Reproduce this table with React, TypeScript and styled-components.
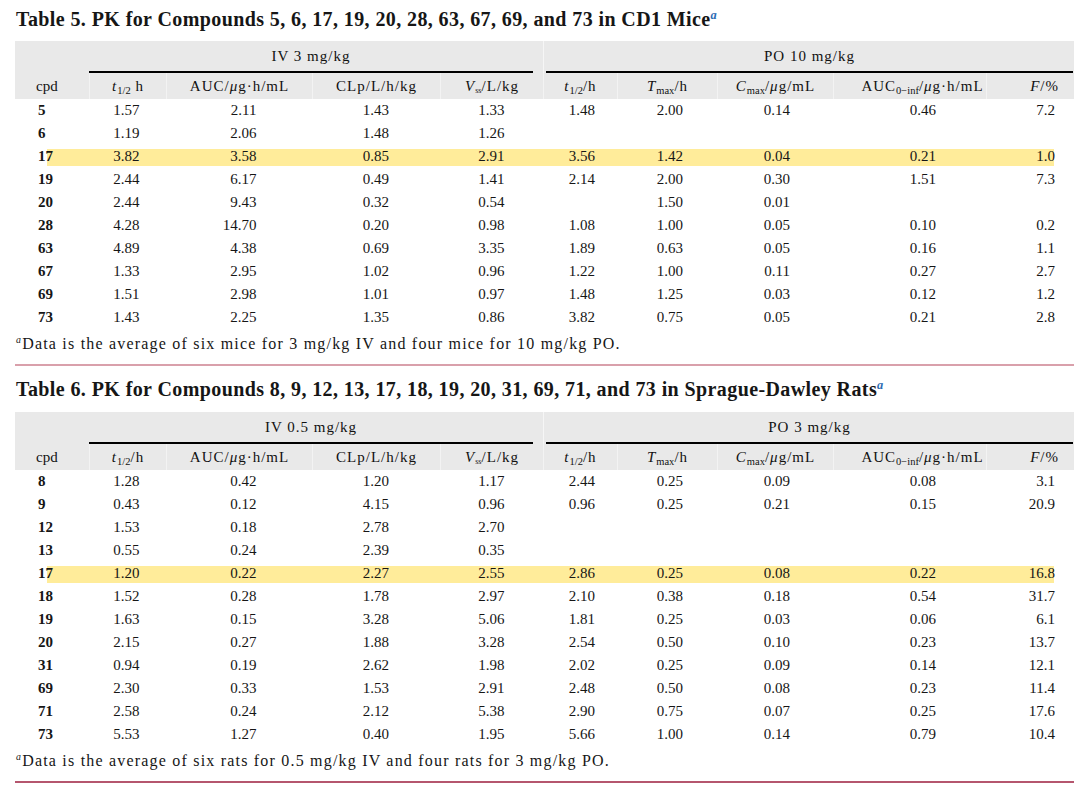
import React from 'react';
import styled, { createGlobalStyle } from 'styled-components';

const GlobalStyle = createGlobalStyle`
  html, body {
    margin: 0;
    padding: 0;
    background: #ffffff;
  }
  body {
    font-family: "Liberation Serif", "Times New Roman", serif;
    color: #161616;
  }
`;

const COLS = '74px 77px 146px 128px 103px 74px 100px 116px 153px 88px';

// right padding for the numbers in each column (decimal alignment)
const DATA_PAD = [0, 26.5, 55.5, 51, 38.5, 22, 34, 43, 50, 19];

const Page = styled.div`
  width: 1059px;
  padding: 7px 0 0 15px;
`;

const Title = styled.h2<{ $top?: number; $bottom?: number }>`
  margin: ${p => p.$top ?? 0}px 0 ${p => p.$bottom ?? 11}px 1px;
  font-size: 20px;
  line-height: 24px;
  font-weight: bold;
  letter-spacing: 0.4px;
  white-space: nowrap;
`;

const Sup = styled.sup<{ $link?: boolean }>`
  font-style: italic;
  font-size: 0.62em;
  line-height: 0;
  vertical-align: 0.6em;
  color: ${p => (p.$link ? '#2d6cb3' : 'inherit')};
`;

const I = styled.i`
  font-style: italic;
`;

const Sub = styled.sub<{ $small?: boolean }>`
  font-size: ${p => (p.$small ? '0.55em' : '0.7em')};
  line-height: 0;
  vertical-align: -0.3em;
  letter-spacing: 0;
`;

const HeadBlock = styled.div`
  background: #e9e9e9;
  color: #111;
  font-size: 15px;
  letter-spacing: 1px;
`;

const GroupRow = styled.div`
  display: grid;
  grid-template-columns: 74px 454px 531px;
  height: 32px;
`;

const GroupCell = styled.div<{ $divider?: boolean }>`
  display: flex;
  align-items: flex-end;
  border-left: ${p => (p.$divider ? '1px solid #f6f6f6' : 'none')};
`;

const GroupLabel = styled.div<{ $ml: number; $mr: number }>`
  flex: 1;
  margin: 0 ${p => p.$mr}px 0 ${p => p.$ml}px;
  height: 30px;
  line-height: 30px;
  text-align: center;
  border-bottom: 2px solid #000;
`;

const HeadRow = styled.div`
  display: grid;
  grid-template-columns: ${COLS};
  height: 26px;
  line-height: 26px;
`;

const HeadCell = styled.div<{ $align?: string; $pl?: number; $pr?: number; $tight?: boolean }>`
  text-align: ${p => p.$align ?? 'center'};
  padding-left: ${p => p.$pl ?? 0}px;
  padding-right: ${p => p.$pr ?? 0}px;
  letter-spacing: ${p => (p.$tight ? '0' : 'inherit')};
  white-space: nowrap;
  border-left: 1px solid #f3f3f3;
  &:first-child {
    border-left: none;
  }
`;

const Row = styled.div<{ $hl?: boolean }>`
  display: grid;
  grid-template-columns: ${COLS};
  height: 23px;
  line-height: 23px;
  font-size: 15px;
  position: relative;

  &::before {
    content: '';
    display: ${p => (p.$hl ? 'block' : 'none')};
    position: absolute;
    left: 32px;
    right: 20px;
    top: 4px;
    bottom: 2px;
    background: #ffec9a;
  }
`;

const Cpd = styled.div`
  position: relative;
  padding-left: 23px;
  font-weight: bold;
`;

const Num = styled.div<{ $pad: number }>`
  position: relative;
  text-align: right;
  padding-right: ${p => p.$pad}px;
`;

const Note = styled.p`
  margin: 5px 0 0 1px;
  font-size: 16px;
  line-height: 20px;
  letter-spacing: 1.2px;
  white-space: nowrap;
`;

const Rule = styled.div<{ $color: string }>`
  margin-top: 10px;
  height: 2px;
  background: ${p => p.$color};
`;

type RowData = { cpd: string; v: string[]; hl?: boolean };

const mice: RowData[] = [
  { cpd: '5', v: ['1.57', '2.11', '1.43', '1.33', '1.48', '2.00', '0.14', '0.46', '7.2'] },
  { cpd: '6', v: ['1.19', '2.06', '1.48', '1.26', '', '', '', '', ''] },
  { cpd: '17', v: ['3.82', '3.58', '0.85', '2.91', '3.56', '1.42', '0.04', '0.21', '1.0'], hl: true },
  { cpd: '19', v: ['2.44', '6.17', '0.49', '1.41', '2.14', '2.00', '0.30', '1.51', '7.3'] },
  { cpd: '20', v: ['2.44', '9.43', '0.32', '0.54', '', '1.50', '0.01', '', ''] },
  { cpd: '28', v: ['4.28', '14.70', '0.20', '0.98', '1.08', '1.00', '0.05', '0.10', '0.2'] },
  { cpd: '63', v: ['4.89', '4.38', '0.69', '3.35', '1.89', '0.63', '0.05', '0.16', '1.1'] },
  { cpd: '67', v: ['1.33', '2.95', '1.02', '0.96', '1.22', '1.00', '0.11', '0.27', '2.7'] },
  { cpd: '69', v: ['1.51', '2.98', '1.01', '0.97', '1.48', '1.25', '0.03', '0.12', '1.2'] },
  { cpd: '73', v: ['1.43', '2.25', '1.35', '0.86', '3.82', '0.75', '0.05', '0.21', '2.8'] },
];

const rats: RowData[] = [
  { cpd: '8', v: ['1.28', '0.42', '1.20', '1.17', '2.44', '0.25', '0.09', '0.08', '3.1'] },
  { cpd: '9', v: ['0.43', '0.12', '4.15', '0.96', '0.96', '0.25', '0.21', '0.15', '20.9'] },
  { cpd: '12', v: ['1.53', '0.18', '2.78', '2.70', '', '', '', '', ''] },
  { cpd: '13', v: ['0.55', '0.24', '2.39', '0.35', '', '', '', '', ''] },
  { cpd: '17', v: ['1.20', '0.22', '2.27', '2.55', '2.86', '0.25', '0.08', '0.22', '16.8'], hl: true },
  { cpd: '18', v: ['1.52', '0.28', '1.78', '2.97', '2.10', '0.38', '0.18', '0.54', '31.7'] },
  { cpd: '19', v: ['1.63', '0.15', '3.28', '5.06', '1.81', '0.25', '0.03', '0.06', '6.1'] },
  { cpd: '20', v: ['2.15', '0.27', '1.88', '3.28', '2.54', '0.50', '0.10', '0.23', '13.7'] },
  { cpd: '31', v: ['0.94', '0.19', '2.62', '1.98', '2.02', '0.25', '0.09', '0.14', '12.1'] },
  { cpd: '69', v: ['2.30', '0.33', '1.53', '2.91', '2.48', '0.50', '0.08', '0.23', '11.4'] },
  { cpd: '71', v: ['2.58', '0.24', '2.12', '5.38', '2.90', '0.75', '0.07', '0.25', '17.6'] },
  { cpd: '73', v: ['5.53', '1.27', '0.40', '1.95', '5.66', '1.00', '0.14', '0.79', '10.4'] },
];

const PkTable: React.FC<{ iv: string; po: string; halfSep: string; rows: RowData[] }> = ({
  iv,
  po,
  halfSep,
  rows,
}) => (
  <>
    <HeadBlock>
      <GroupRow>
        <GroupCell />
        <GroupCell>
          <GroupLabel $ml={0} $mr={10}>{iv}</GroupLabel>
        </GroupCell>
        <GroupCell $divider>
          <GroupLabel $ml={2} $mr={1}>{po}</GroupLabel>
        </GroupCell>
      </GroupRow>
      <HeadRow>
        <HeadCell $align="left" $pl={21} $tight>cpd</HeadCell>
        <HeadCell>
          <I>t</I>
          <Sub>1/2</Sub>
          {halfSep}h
        </HeadCell>
        <HeadCell>
          AUC/<I>μ</I>g·h/mL
        </HeadCell>
        <HeadCell>CLp/L/h/kg</HeadCell>
        <HeadCell>
          <I>V</I>
          <Sub $small>ss</Sub>/L/kg
        </HeadCell>
        <HeadCell>
          <I>t</I>
          <Sub>1/2</Sub>/h
        </HeadCell>
        <HeadCell>
          <I>T</I>
          <Sub>max</Sub>/h
        </HeadCell>
        <HeadCell>
          <I>C</I>
          <Sub>max</Sub>/<I>μ</I>g/mL
        </HeadCell>
        <HeadCell $pl={25}>
          AUC<Sub>0−inf</Sub>/<I>μ</I>g·h/mL
        </HeadCell>
        <HeadCell $align="right" $pr={15}>
          <I>F</I>/%
        </HeadCell>
      </HeadRow>
    </HeadBlock>
    {rows.map(r => (
      <Row key={r.cpd} $hl={r.hl}>
        <Cpd>{r.cpd}</Cpd>
        {r.v.map((x, i) => (
          <Num key={i} $pad={DATA_PAD[i + 1]}>
            {x}
          </Num>
        ))}
      </Row>
    ))}
  </>
);

const App: React.FC = () => (
  <Page>
    <GlobalStyle />
    <Title $bottom={10}>
      Table 5. PK for Compounds 5, 6, 17, 19, 20, 28, 63, 67, 69, and 73 in CD1 Mice
      <Sup $link>a</Sup>
    </Title>
    <PkTable iv="IV 3 mg/kg" po="PO 10 mg/kg" halfSep=" " rows={mice} />
    <Note>
      <Sup>a</Sup>Data is the average of six mice for 3 mg/kg IV and four mice for 10 mg/kg PO.
    </Note>
    <Rule $color="#d9a0ab" />

    <Title $top={11}>
      Table 6. PK for Compounds 8, 9, 12, 13, 17, 18, 19, 20, 31, 69, 71, and 73 in Sprague-Dawley Rats
      <Sup $link>a</Sup>
    </Title>
    <PkTable iv="IV 0.5 mg/kg" po="PO 3 mg/kg" halfSep="/" rows={rats} />
    <Note>
      <Sup>a</Sup>Data is the average of six rats for 0.5 mg/kg IV and four rats for 3 mg/kg PO.
    </Note>
    <Rule $color="#b5566e" />
  </Page>
);

export default App;
